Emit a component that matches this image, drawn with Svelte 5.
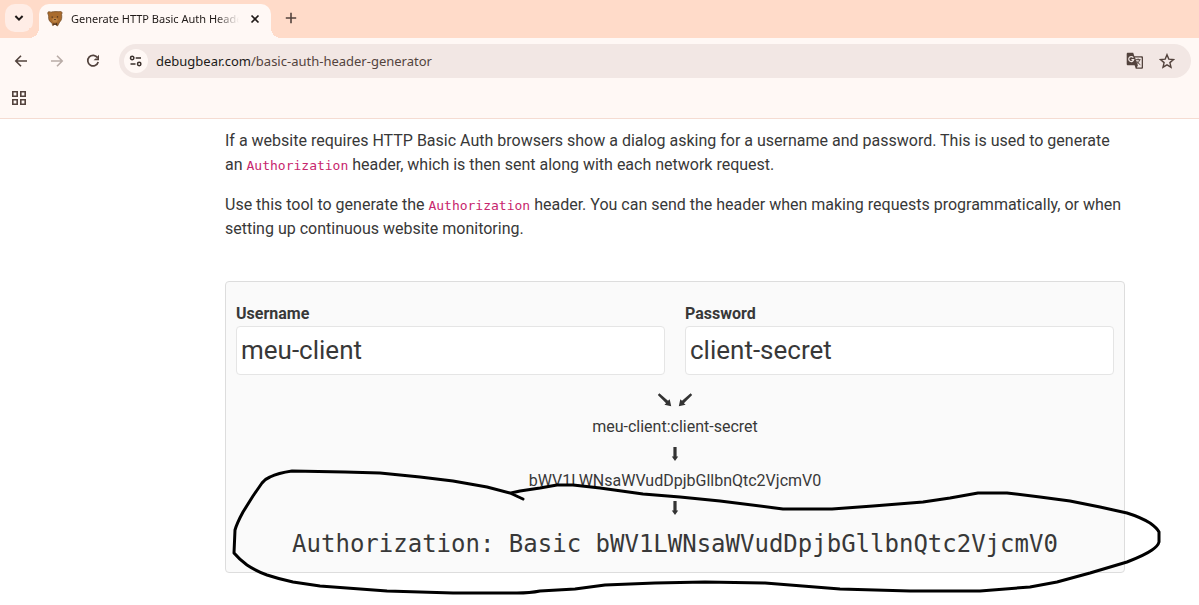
<script>
  let username = $state('meu-client');
  let password = $state('client-secret');
  const credentials = $derived(`${username}:${password}`);
  const encoded = $derived(btoa(credentials));
</script>

{#snippet downArrow()}
  <svg class="arrow" width="8" height="14" viewBox="0 0 8 14" aria-hidden="true">
    <path d="M2.4 0h3.2v9.6H7.2L4 14 .8 9.6h1.6z" />
  </svg>
{/snippet}

<header>
  <div class="tabs">
    <button class="search" aria-label="Search tabs">
      <svg width="10" height="8" viewBox="0 0 10 8"><path d="M1.4 2 5 5.6 8.6 2" fill="none" stroke="#201a18" stroke-width="2" /></svg>
    </button>
    <div class="tab">
      <svg class="bear" width="16" height="16" viewBox="0 0 16 16" aria-hidden="true">
        <path d="M1 3C0 1 2 0 4 1.2 6 .5 10 .5 12 .7c2-1 4 .6 2.6 2.6C15 6 15 9 12.7 11L10.5 15 8 13.2 5.6 14.5 5 12C2 10.5 1.3 8 1.7 5z" fill="#a96b2d" stroke="#6e4824" stroke-width=".7" />
        <path d="M5.2 8.5C6 6.6 10 6.6 10.7 8.5c.3 2-1.2 3-2.7 3s-3-1-2.8-3z" fill="#bd8343" />
        <path d="M4.6 5.6h1.2v1.2H4.6zM9.9 5.3h1.2v1.2H9.9zM7.2 8h1.6v1.1H7.2zM6.5 12 8 12.7l2-1 .4 2.8L8 13.6l-2 .9z" fill="#4c321e" />
      </svg>
      <span class="title">Generate HTTP Basic Auth Header</span>
      <button class="close" aria-label="Close tab">
        <svg width="10" height="10" viewBox="0 0 10 10"><path d="m1.5 1.5 7 7m0-7-7 7" stroke="#201a18" stroke-width="1.7" /></svg>
      </button>
    </div>
    <button class="new" aria-label="New tab">
      <svg width="12" height="12" viewBox="0 0 12 12"><path d="M6 .8v10.4M.8 6h10.4" stroke="#53433d" stroke-width="1.6" /></svg>
    </button>
  </div>

  <nav class="toolbar" aria-label="Browser">
    <button aria-label="Back">
      <svg width="14" height="12" viewBox="0 0 14 12"><path d="M13 6H1.8M7 .8 1.8 6 7 11.2" fill="none" stroke="#53433d" stroke-width="1.6" /></svg>
    </button>
    <button aria-label="Forward">
      <svg width="14" height="12" viewBox="0 0 14 12"><path d="M1 6h11.2M7 .8 12.2 6 7 11.2" fill="none" stroke="#b9aca7" stroke-width="1.6" /></svg>
    </button>
    <button aria-label="Reload">
      <svg width="14" height="14" viewBox="0 0 14 14"><path d="M11.6 3.8A5.3 5.3 0 1 0 12.2 8" fill="none" stroke="#53433d" stroke-width="1.7" /><path d="M13 .8v5.4H7.6l1.8-1.6h2V2.6z" fill="#53433d" /></svg>
    </button>
    <div class="address">
      <button class="site" aria-label="Site information">
        <svg width="14" height="12" viewBox="0 0 14 12" fill="none" stroke="#3a2f2b" stroke-width="1.5"><circle cx="3.2" cy="3" r="1.7" /><path d="M6.7 3H12M1.5 9h5" /><circle cx="10.2" cy="9" r="1.7" /></svg>
      </button>
      <a class="url" href="#header-generator">debugbear.com<span>/basic-auth-header-generator</span></a>
      <button class="action" aria-label="Translate">
        <svg width="18" height="18" viewBox="0 0 18 18">
          <path d="M2 .8h5.2l1.2 3.4h7.2c.9 0 1.4.5 1.4 1.4v9.8c0 .9-.5 1.4-1.4 1.4H9.8L8.6 13.3H2c-.8 0-1.3-.5-1.3-1.3V2.1C.7 1.3 1.2.8 2 .8z" fill="#53433d" />
          <path d="M9 5.5h6.1c.4 0 .6.2.6.6v8.8c0 .4-.2.6-.6.6h-4.2l1-2.2z" fill="#f2e7e4" />
          <path d="M7.3 5.6A2.5 2.5 0 1 0 7.7 7.7H5.4" fill="none" stroke="#f2e7e4" stroke-width="1.2" />
          <path d="M9.6 7.7h5M12.1 6.5v1.2m1.5 0c-.4 2-1.8 3.5-3.2 4.3m.3-2.9c.8 1.4 2 2.7 3.7 3.7" fill="none" stroke="#53433d" stroke-width="1" />
        </svg>
      </button>
      <button class="action" aria-label="Bookmark this tab">
        <svg width="16" height="16" viewBox="0 0 16 16"><path d="m8 1.7 1.8 4.4 4.7.4-3.6 3.1 1.1 4.6L8 11.8l-4 2.4 1.1-4.6-3.6-3.1 4.7-.4z" fill="none" stroke="#53433d" stroke-width="1.4" /></svg>
      </button>
    </div>
  </nav>

  <div class="bookmarks">
    <button aria-label="Tab groups">
      <svg width="16" height="16" viewBox="0 0 16 16" fill="none" stroke="#53433d" stroke-width="1.6"><path d="M1.8 1.8h4.4v4.4H1.8zM9.8 1.8h4.4v4.4H9.8zM1.8 9.8h4.4v4.4H1.8zM9.8 9.8h4.4v4.4H9.8z" /></svg>
    </button>
  </div>
</header>

<main>
  <p>If a website requires HTTP Basic Auth browsers show a dialog asking for a username and password. This is used to generate an <code>Authorization</code> header, which is then sent along with each network request.</p>
  <p>Use this tool to generate the <code>Authorization</code> header. You can send the header when making requests programmatically, or when setting up continuous website monitoring.</p>

  <section class="card" id="header-generator">
    <div class="fields">
      <label for="username">Username
        <input id="username" type="text" bind:value={username} />
      </label>
      <label for="password">Password
        <input id="password" type="text" bind:value={password} />
      </label>
    </div>
    <div class="steps">
      <div class="row">
        <svg class="arrow" width="36" height="14" viewBox="0 0 36 14" aria-hidden="true">
          <path d="M2.4.2 11 7.8l1.7-1.5 1.5 7-6.8-1.5 1.7-1.6L.8 2zM33.6.2 25 7.8l-1.7-1.5-1.5 7 6.8-1.5-1.7-1.6L35.2 2z" />
        </svg>
      </div>
      <div class="row">{credentials}</div>
      <div class="row">{@render downArrow()}</div>
      <div class="row">{encoded}</div>
      <div class="row">{@render downArrow()}</div>
    </div>
    <output class="result" for="username password">Authorization: Basic {encoded}</output>

    <svg class="ink" viewBox="1 1 898 290" aria-hidden="true">
      <path d="M298 218 285 212 262 206 228 200 195 196 155 192 120 191 67 190Q53 192 45 196 40 198 37 202L28 215 18 231 Q12 242 10 249L9 272Q14 278 22 284 31 290 42 294 54 298 68 301L95 305 162 310 228 312H292Q305 312 315 310L350 308 380 304 430 302 480 301 540 302 615 308 685 310H755L805 306 832 301 865 292 902 281Q920 274 927 269 933 265 934 261V251Q932 247 925 242 915 236 902 232L875 226 845 220 815 216 782 212H753L725 217 698 221 648 225 607 228H558L495 220 455 216 418 213 375 207 348 204 332 204 315 207 295 210 286 212" />
    </svg>
  </section>
</main>

<style>
  :global(body) { background: #fff; }
  :global(*) { box-sizing: border-box; }
  button { display: grid; place-items: center; flex: none; padding: 0; border: 0; background: none; }
  svg { display: block; }
  header { background: #fff8f5; border-bottom: 1px solid #f5dcd2; font-family: "Noto Sans", sans-serif; }
  .tabs { display: flex; height: 38px; padding: 4px 6px 0 5px; background: #ffdbc9; }
  .search { width: 28px; height: 28px; margin-right: 6px; border-radius: 10px; background: #ffede6; }
  .tab { position: relative; display: flex; align-items: center; width: 232px; padding: 0 8px 5px; background: #fff8f5; border-radius: 10px 10px 0 0; }
  .tab::before, .tab::after { content: ""; position: absolute; bottom: 0; width: 10px; height: 10px; }
  .tab::before { right: 100%; background: radial-gradient(circle at 0 0, #ffdbc9 10px, #fff8f5 10px); }
  .tab::after { left: 100%; background: radial-gradient(circle at 100% 0, #ffdbc9 10px, #fff8f5 10px); }
  .bear { flex: none; margin-right: 8px; }
  .title { flex: 1; overflow: hidden; white-space: nowrap; font-size: 11px; color: #201a18; mask-image: linear-gradient(90deg, #000 86%, transparent); }
  .close { width: 16px; height: 16px; margin-left: 8px; }
  .new { width: 28px; height: 28px; margin-left: 6px; }
  .toolbar { display: flex; align-items: center; height: 46px; padding: 0 8px 0 7px; gap: 8px; }
  .toolbar > button { width: 28px; height: 28px; }
  .address { flex: 1; display: flex; align-items: center; height: 34px; margin-left: 4px; padding: 0 12px 0 5px; border-radius: 17px; background: #f2e7e4; }
  .site { width: 24px; height: 24px; border-radius: 50%; background: #fff8f5; }
  .url { flex: 1; margin-left: 8px; font-size: 13px; color: #201a18; text-decoration: none; white-space: nowrap; }
  .url span { color: #53433d; }
  .action { width: 24px; height: 24px; margin-left: 8px; }
  .bookmarks { height: 34px; padding: 6px 11px; }
  .bookmarks button { width: 16px; height: 16px; }
  main { max-width: 1125px; margin-right: 74px; padding: 10px 0 30px 225px; font: 16px/24px Roboto, sans-serif; color: #383838; }
  p { margin: 0 0 16px; }
  code { font: 13px/1 "DejaVu Sans Mono", monospace; color: #c7256d; }
  .card { position: relative; margin-top: 40px; padding: 20px 10px 12px; border: 1px solid #ddd; border-radius: 4px; background: #fafafa; }
  .fields { display: grid; grid-template-columns: 1fr 1fr; gap: 20px; }
  label { font-weight: 700; }
  input { display: block; width: 100%; height: 49px; padding: 0 4px 2px; border: 1px solid #e5e5e5; border-radius: 4px; background: #fff; font: 26px Roboto, sans-serif; color: #383838; }
  .steps { margin-top: 11px; }
  .row { display: flex; align-items: center; justify-content: center; height: 27px; }
  .arrow { fill: #333; }
  .result { display: block; margin-top: 7px; text-align: center; font: 24px/32px "DejaVu Sans Mono", monospace; }
  .ink { position: absolute; left: 0; top: 0; width: 100%; overflow: visible; fill: none; stroke: #000; stroke-width: 3; stroke-linecap: round; stroke-linejoin: round; pointer-events: none; }
</style>
